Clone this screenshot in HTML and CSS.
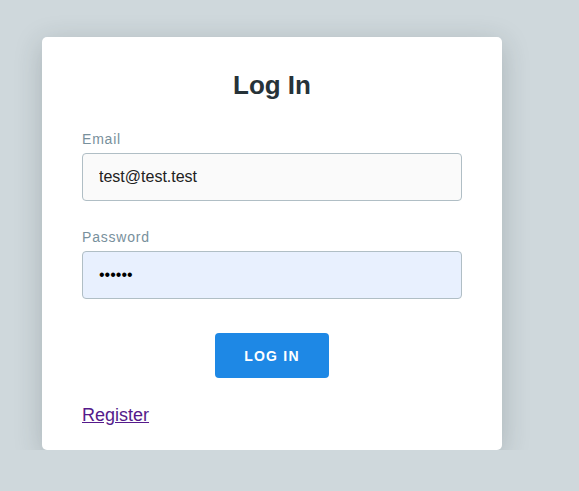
FILE: index.html
```html
<!DOCTYPE html>
<html>
<head>
<meta charset="utf-8">
<link rel="stylesheet" href="styles.css">
</head>
<body>
<main class="page">
  <form class="card">
    <h1 class="title">Log In</h1>
    <label class="label" for="email">Email</label>
    <input class="input" id="email" type="text" value="test@test.test">
    <label class="label label-pw" for="pw">Password</label>
    <input class="input input-auto" id="pw" type="password" value="secret">
    <div class="actions">
      <button class="btn" type="button">LOG IN</button>
    </div>
    <a class="link" href="#">Register</a>
  </form>
</main>
</body>
</html>
```
FILE: styles.css
```css
html, body {
  margin: 0;
  padding: 0;
  background: #cfd8dc;
  font-family: "Liberation Sans", Arial, sans-serif;
}
.page {
  padding: 37px 0 0 42px;
}
.card {
  width: 460px;
  box-sizing: border-box;
  background: #ffffff;
  border-radius: 5px;
  padding: 33px 40px 25px;
  display: flex;
  flex-direction: column;
  box-shadow: 0 6px 28px rgba(38, 50, 56, 0.22);
}
.title {
  margin: 0;
  font-size: 26px;
  line-height: 30px;
  font-weight: 700;
  color: #263238;
  text-align: center;
}
.label {
  margin-top: 31px;
  font-size: 14px;
  line-height: 16px;
  letter-spacing: 0.8px;
  color: #78909c;
}
.label-pw {
  margin-top: 28px;
}
.input {
  margin-top: 6px;
  height: 48px;
  box-sizing: border-box;
  border: 1px solid #b0bec5;
  border-radius: 4px;
  background: #fafafa;
  padding: 0 16px;
  font-family: "Liberation Sans", Arial, sans-serif;
  font-size: 16px;
  color: #212121;
  outline: none;
}
.input-auto {
  background: #e8f0fe;
  color: #000;
}
.actions {
  margin-top: 34px;
  display: flex;
  justify-content: center;
}
.btn {
  width: 114px;
  height: 45px;
  border: none;
  border-radius: 4px;
  background: #1e88e5;
  color: #ffffff;
  font-family: "Liberation Sans", Arial, sans-serif;
  font-size: 14px;
  font-weight: 700;
  letter-spacing: 1.2px;
  padding: 0;
}
.link {
  align-self: flex-start;
  margin-top: 27px;
  font-size: 18px;
  line-height: 20px;
  color: #551a8b;
}
```
